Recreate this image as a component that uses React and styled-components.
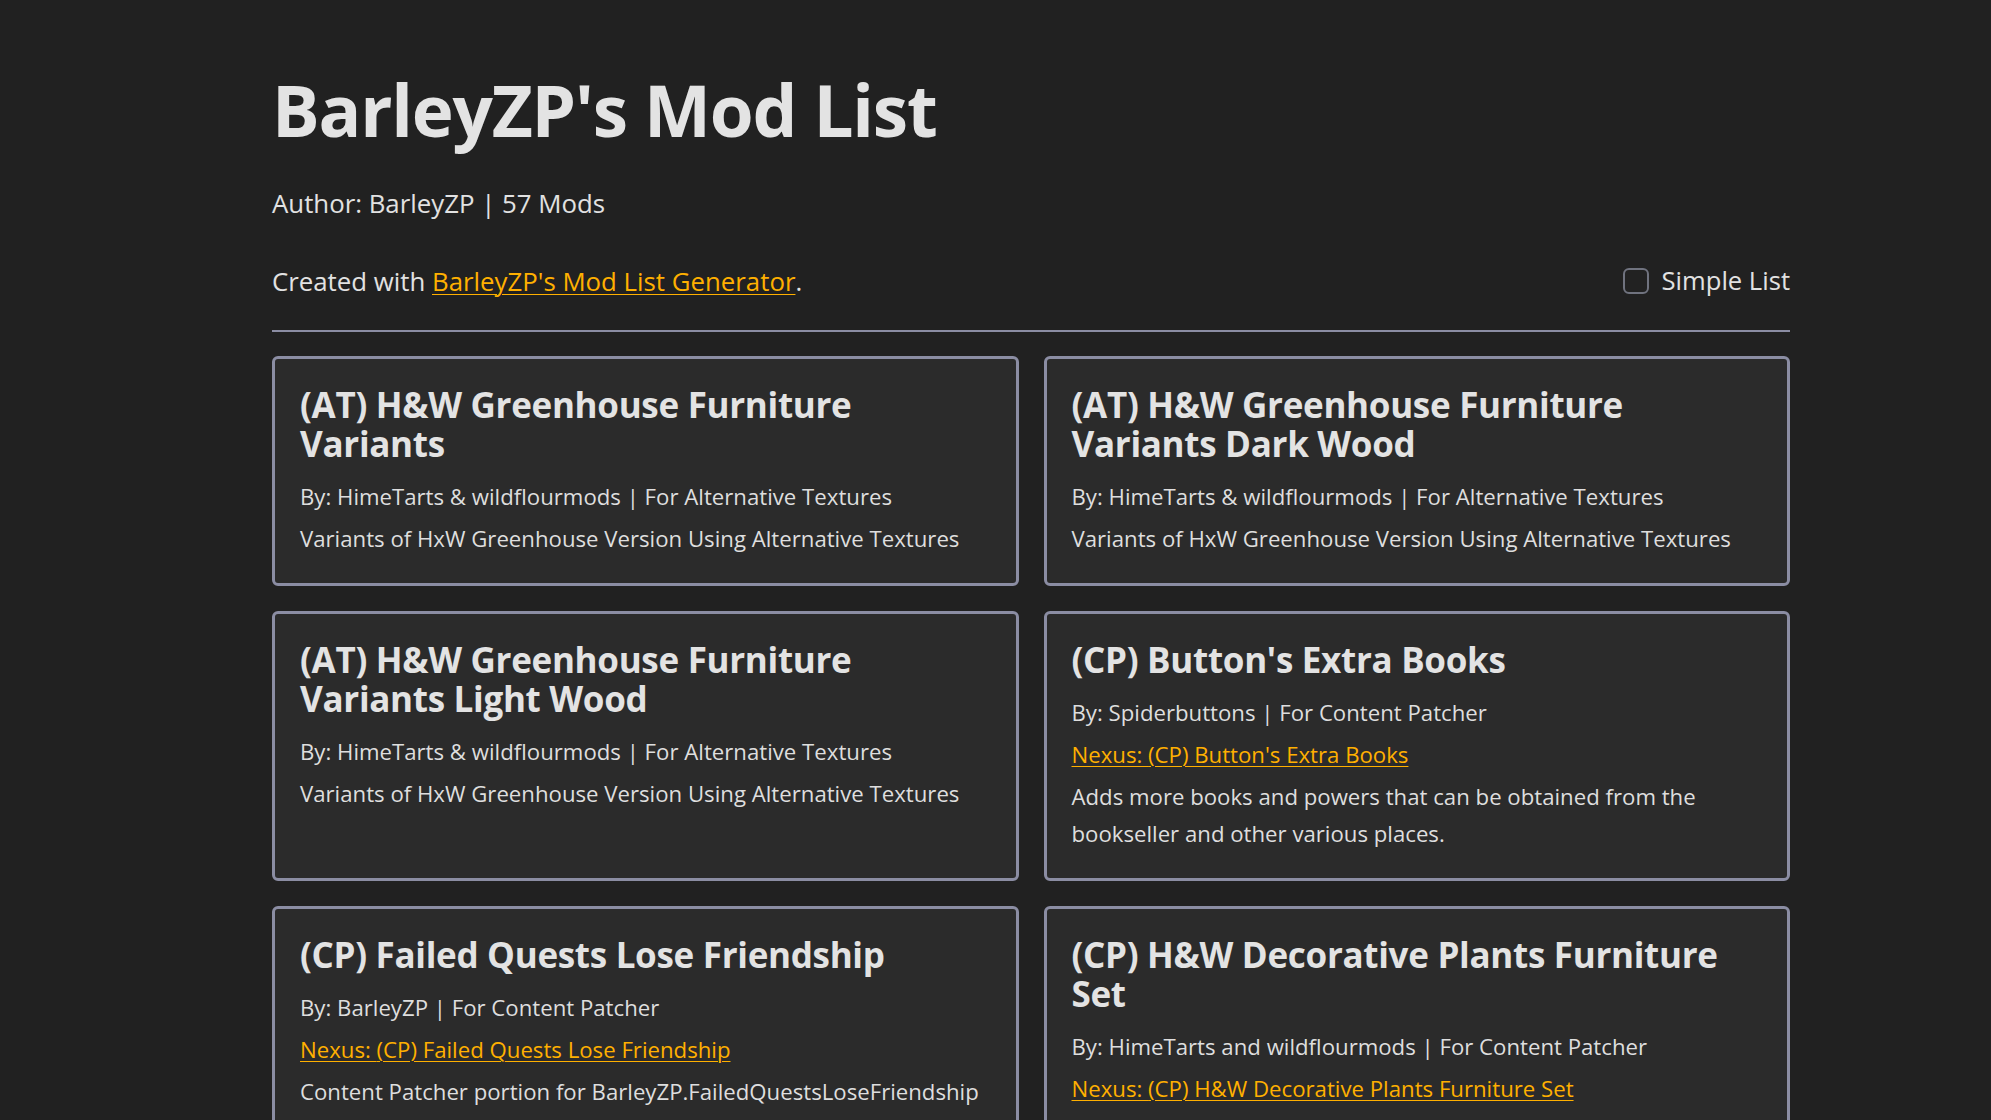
import React, { useState } from 'react';
import styled, { createGlobalStyle } from 'styled-components';

const FONT = `"Open Sans", "Noto Sans", sans-serif`;

const GlobalStyle = createGlobalStyle`
  html, body {
    margin: 0;
    padding: 0;
    background: #212121;
    color: #e2e2e2;
    font-family: ${FONT};
  }
`;

const Page = styled.div`
  width: 1518px;
  margin: 0 0 0 272px;
  padding: 67px 0 40px;
`;

const Title = styled.h1`
  margin: 0;
  font-size: 71px;
  line-height: 85px;
  font-weight: 700;
  color: #e3e3e3;
  letter-spacing: -1.2px;
`;

const Line = styled.p`
  margin: ${p => p.$top || 0}px 0 0;
  font-size: 25.8px;
  line-height: 36px;
  color: #e2e2e2;
`;

const Toolbar = styled.div`
  display: flex;
  align-items: center;
  justify-content: space-between;
  margin-top: 42px;
`;

const Link = styled.a`
  color: #ffb000;
  text-decoration: underline;
  text-underline-offset: 3px;
  text-decoration-thickness: 1px;
`;

const Toggle = styled.label`
  display: flex;
  align-items: center;
  gap: 13px;
  font-size: 25.6px;
  line-height: 36px;
  cursor: pointer;
`;

const Check = styled.input`
  appearance: none;
  margin: 0;
  width: 26px;
  height: 26px;
  border: 2px solid #70737f;
  border-radius: 6px;
  background: #222;
  &:checked {
    background: #ffb000;
    border-color: #ffb000;
  }
`;

const Rule = styled.hr`
  margin: 31px 0 24px;
  border: 0;
  height: 2px;
  background: #8b8da3;
`;

const Grid = styled.div`
  display: grid;
  grid-template-columns: 1fr 1fr;
  gap: 25px;
`;

const Card = styled.div`
  border: 3px solid #8b8da3;
  border-radius: 6px;
  background: #2b2b2b;
  padding: 26px 25px 21px;
`;

const CardTitle = styled.h2`
  margin: 0 0 15px;
  font-size: 35px;
  line-height: 39px;
  font-weight: 700;
  color: #e3e3e3;
  letter-spacing: -0.3px;
`;

const CardText = styled.p`
  margin: 0 0 5px;
  font-size: 22.2px;
  line-height: 37px;
  color: #dedede;
`;

const mods = [
  {
    name: '(AT) H&W Greenhouse Furniture Variants',
    author: 'HimeTarts & wildflourmods',
    fw: 'Alternative Textures',
    desc: 'Variants of HxW Greenhouse Version Using Alternative Textures',
  },
  {
    name: '(AT) H&W Greenhouse Furniture Variants Dark Wood',
    author: 'HimeTarts & wildflourmods',
    fw: 'Alternative Textures',
    desc: 'Variants of HxW Greenhouse Version Using Alternative Textures',
  },
  {
    name: '(AT) H&W Greenhouse Furniture Variants Light Wood',
    author: 'HimeTarts & wildflourmods',
    fw: 'Alternative Textures',
    desc: 'Variants of HxW Greenhouse Version Using Alternative Textures',
  },
  {
    name: "(CP) Button's Extra Books",
    author: 'Spiderbuttons',
    fw: 'Content Patcher',
    nexus: true,
    desc: 'Adds more books and powers that can be obtained from the bookseller and other various places.',
  },
  {
    name: '(CP) Failed Quests Lose Friendship',
    author: 'BarleyZP',
    fw: 'Content Patcher',
    nexus: true,
    desc: 'Content Patcher portion for BarleyZP.FailedQuestsLoseFriendship',
  },
  {
    name: '(CP) H&W Decorative Plants Furniture Set',
    author: 'HimeTarts and wildflourmods',
    fw: 'Content Patcher',
    nexus: true,
    desc: 'Decorative plants furniture set for Hearth & Wild.',
  },
];

export default function App() {
  const [simple, setSimple] = useState(false);

  return (
    <>
      <GlobalStyle />
      <Page>
        <Title>BarleyZP's Mod List</Title>
        <Line $top={33}>Author: BarleyZP | 57 Mods</Line>
        <Toolbar>
          <Line>
            Created with <Link href="#">BarleyZP's Mod List Generator</Link>.
          </Line>
          <Toggle>
            <Check type="checkbox" checked={simple} onChange={e => setSimple(e.target.checked)} />
            Simple List
          </Toggle>
        </Toolbar>
        <Rule />
        <Grid>
          {mods.map(m => (
            <Card key={m.name}>
              <CardTitle>{m.name}</CardTitle>
              <CardText>By: {m.author} | For {m.fw}</CardText>
              {m.nexus && (
                <CardText>
                  <Link href="#">Nexus: {m.name}</Link>
                </CardText>
              )}
              {!simple && <CardText>{m.desc}</CardText>}
            </Card>
          ))}
        </Grid>
      </Page>
    </>
  );
}
